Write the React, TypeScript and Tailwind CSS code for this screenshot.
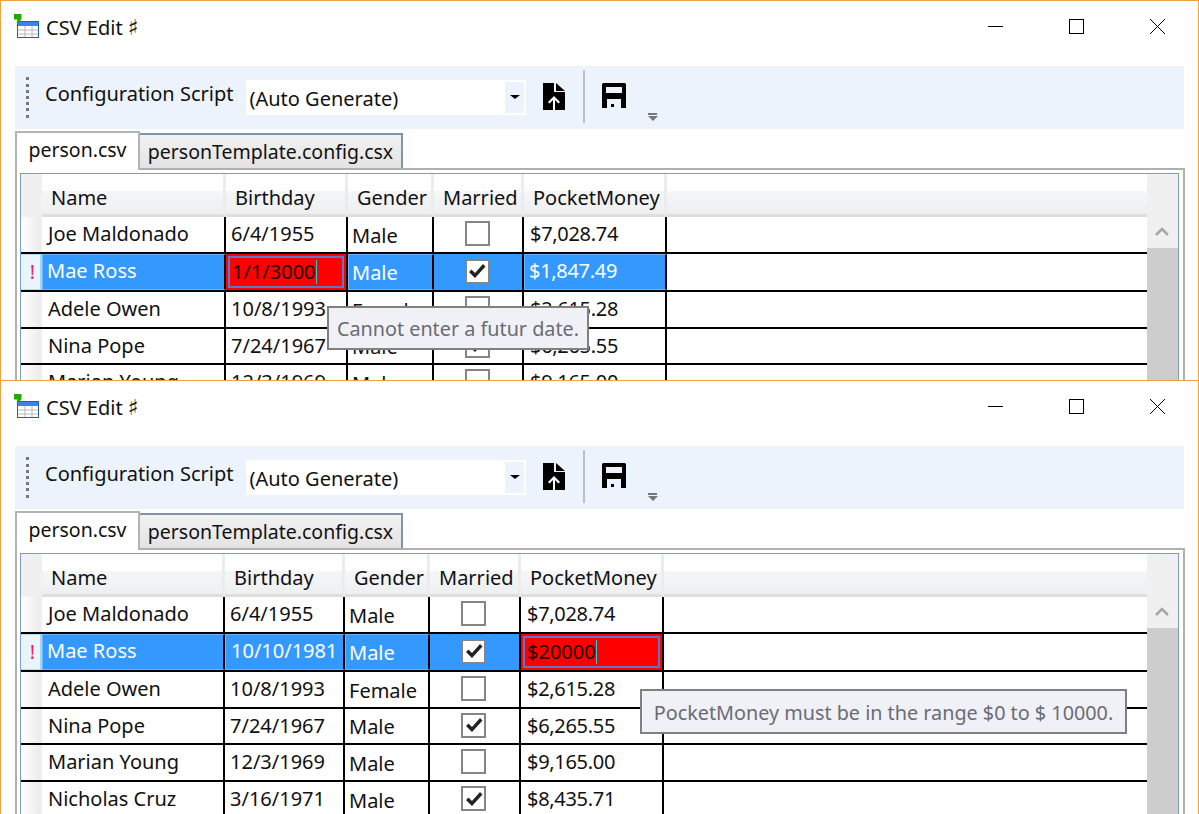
const topColumns = [
  { label: 'Name', width: 'w-[184px]' },
  { label: 'Birthday', width: 'w-[122px]' },
  { label: 'Gender', width: 'w-[86px]' },
  { label: 'Married', width: 'w-[90px]' },
  { label: 'PocketMoney', width: 'w-[143px]' },
];

const bottomColumns = [
  { label: 'Name', width: 'w-[183px]' },
  { label: 'Birthday', width: 'w-[120px]' },
  { label: 'Gender', width: 'w-[85px]' },
  { label: 'Married', width: 'w-[91px]' },
  { label: 'PocketMoney', width: 'w-[143px]' },
];

const topRows = [
  { name: 'Joe Maldonado', birthday: '6/4/1955', gender: 'Male', married: false, money: '$7,028.74', height: 'h-[37px]' },
  { name: 'Mae Ross', birthday: '1/1/3000', gender: 'Male', married: true, money: '$1,847.49', height: 'h-[38px]', selected: true },
  { name: 'Adele Owen', birthday: '10/8/1993', gender: 'Female', married: false, money: '$2,615.28', height: 'h-[37px]' },
  { name: 'Nina Pope', birthday: '7/24/1967', gender: 'Male', married: true, money: '$6,265.55', height: 'h-[36px]' },
  { name: 'Marian Young', birthday: '12/3/1969', gender: 'Male', married: false, money: '$9,165.00', height: 'h-[37px]' },
];

const bottomRows = [
  { name: 'Joe Maldonado', birthday: '6/4/1955', gender: 'Male', married: false, money: '$7,028.74', height: 'h-[37px]' },
  { name: 'Mae Ross', birthday: '10/10/1981', gender: 'Male', married: true, money: '$20000', height: 'h-[38px]', selected: true },
  { name: 'Adele Owen', birthday: '10/8/1993', gender: 'Female', married: false, money: '$2,615.28', height: 'h-[37px]' },
  { name: 'Nina Pope', birthday: '7/24/1967', gender: 'Male', married: true, money: '$6,265.55', height: 'h-[36px]' },
  { name: 'Marian Young', birthday: '12/3/1969', gender: 'Male', married: false, money: '$9,165.00', height: 'h-[37px]' },
  { name: 'Nicholas Cruz', birthday: '3/16/1971', gender: 'Male', married: true, money: '$8,435.71', height: 'h-[37px]' },
];

function AppLogo() {
  return (
    <svg width="27" height="25" viewBox="0 0 27 25" className="-ml-[1px] shrink-0">
      <rect x="3.500" y="8.500" width="21" height="16" fill="#fff" stroke="#1f5fb4" />
      <rect x="4" y="9" width="20" height="4" fill="#3d84e6" />
      <path d="M4 17h20M4 21h20M11 13v11M18 13v11" stroke="#b8b8b8" />
      <path d="M0 1h7.500v5L5 9.500H2.500L3.500 6.500H0z" fill="#1faa00" />
    </svg>
  );
}

function OpenIcon() {
  return (
    <svg width="22" height="27" viewBox="0 0 22 27" className="shrink-0">
      <path d="M0 0h11v9h11v18H0z" fill="#000" />
      <path d="M13 0l9 8h-9z" fill="#000" />
      <path d="M11 13l6 6-1.500 1.500L12 17v10h-2V17l-3.500 3.500L5 19z" fill="#fff" />
    </svg>
  );
}

function SaveIcon() {
  return (
    <svg width="24" height="25" viewBox="0 0 24 25" className="shrink-0">
      <path
        fillRule="evenodd"
        d="M0 1.500A1.500 1.500 0 0 1 1.500 0h21A1.500 1.500 0 0 1 24 1.500V25H0zM4 4v6h16V4zM5 16v9h14v-9zM9 21h3v3H9z"
        fill="#000"
      />
    </svg>
  );
}

function Toolbar() {
  return (
    <div className="flex h-[63px] w-[1169px] shrink-0 items-center bg-[#ecf3fc]">
      <div className="ml-[11px] h-[41px] w-[3px] border-l-[3px] border-dotted border-[#777]" />
      <span className="ml-[16px] mb-[7px] text-[20px]">Configuration Script</span>
      <div className="ml-[13px] mb-[1px] flex h-[35px] w-[280px] items-center bg-white pl-[3px]">
        <span className="mt-[3px] flex-1 text-[20px]">(Auto Generate)</span>
        <div className="mr-[2px] flex h-[31px] w-[19px] items-center justify-center bg-[#ecf3fc]">
          <div className="h-0 w-0 border-x-[5px] border-t-[4px] border-x-transparent border-t-black" />
        </div>
      </div>
      <div className="ml-[17px] mb-[2px]">
        <OpenIcon />
      </div>
      <div className="ml-[18px] mb-[2px] h-[53px] w-[2px] bg-[#b8c0c8]" />
      <div className="ml-[17px] mb-[4px]">
        <SaveIcon />
      </div>
      <div className="ml-[22px] mt-[38px] flex w-[9px] flex-col items-center gap-[1px]">
        <div className="h-[2px] w-[9px] bg-[#777]" />
        <div className="h-0 w-0 border-x-[5px] border-t-[5px] border-x-transparent border-t-[#777]" />
      </div>
    </div>
  );
}

function Tabs() {
  return (
    <div className="flex h-[39px] shrink-0 items-end">
      <div className="z-10 -mb-[2px] flex h-[39px] w-[125px] items-center justify-center border-2 border-b-0 border-[#b4b4b4] bg-white pb-[3px] text-[19.500px]">
        person.csv
      </div>
      <div className="flex h-[35px] w-[263px] items-center justify-center border-2 border-b-0 border-l-0 border-[#7d96ad] bg-gradient-to-b from-[#f2f2f2] to-[#e3e3e3] text-[19.500px]">
        personTemplate.config.csx
      </div>
    </div>
  );
}

function Header({ columns }: { columns: typeof topColumns }) {
  return (
    <div className="flex h-[43px] shrink-0">
      <div className="w-[21px] bg-[#f0f0f0]" />
      {columns.map((col) => (
        <div
          key={col.label}
          className={`${col.width} flex items-center border-r-[3px] border-b-[3px] border-r-[#ececec] border-b-[#dedede] bg-[linear-gradient(#fff_42%,#f5f6f8_42%,#eeeff1)] pt-[7px] pl-[9px] text-[20px]`}
        >
          {col.label}
        </div>
      ))}
      <div className="flex-1 border-b-[3px] border-[#dedede] bg-[linear-gradient(#fff_42%,#f5f6f8_42%,#eeeff1)]" />
    </div>
  );
}

function Checkbox({ checked }: { checked: boolean }) {
  return (
    <div className="mr-[2px] mb-[2px] flex h-[25px] w-[25px] items-center justify-center border-2 border-[#858585] bg-white">
      {checked && (
        <svg width="18" height="16" viewBox="0 0 18 16">
          <path d="M1 9l2.500-2.500L7 10l8-9 2.500 2.500L7 15z" fill="#222" />
        </svg>
      )}
    </div>
  );
}

type Row = (typeof bottomRows)[number];

function Cell({
  width,
  text,
  selected,
  invalid,
  className,
}: {
  width: string;
  text: string;
  selected?: boolean;
  invalid?: boolean;
  className: string;
}) {
  if (invalid) {
    return (
      <div className={`${width} flex items-stretch border-r-2 border-black bg-[#ff0000] p-[2px] text-[20px] text-[#200]`}>
        <div className="flex flex-1 items-center border-2 border-[#5f77c4] pl-[2px]">
          <span>{text}</span>
          <div className="h-[24px] w-[1px] bg-[#21d0d8]" />
        </div>
      </div>
    );
  }
  return (
    <div
      className={`${width} flex items-center border-r-2 border-black text-[20px] ${className} ${
        selected ? 'border-y border-l border-y-[#6db4ff] border-l-[#6db4ff] bg-[#3399ff] text-white' : ''
      }`}
    >
      {text}
    </div>
  );
}

function DataRow({
  row,
  columns,
  invalidField,
}: {
  row: Row & { selected?: boolean };
  columns: typeof topColumns;
  invalidField: 'birthday' | 'money';
}) {
  const selected = !!row.selected;
  return (
    <div className={`${row.height} flex shrink-0 border-b-2 border-black`}>
      <div
        className={`flex w-[21px] shrink-0 items-center justify-center border-r-2 pl-[4px] text-[20px] text-[#ff1a4a] ${
          selected
            ? 'border-y border-y-[#b8def5] border-r-[#a5d3f0] bg-[#e9f5fc]'
            : 'border-r-[#eee] bg-gradient-to-r from-white to-[#ececec]'
        }`}
      >
        {selected ? '!' : ''}
      </div>
      <Cell
        width={columns[0].width}
        text={row.name}
        selected={selected}
        className={selected ? 'pl-[4px] pb-[2px]' : 'pl-[6px] pb-[1px]'}
      />
      <Cell
        width={columns[1].width}
        text={row.birthday}
        selected={selected}
        invalid={selected && invalidField === 'birthday'}
        className={selected ? 'pl-[5px] pb-[2px]' : 'pl-[5px] pb-[1px]'}
      />
      <Cell
        width={columns[2].width}
        text={row.gender}
        selected={selected}
        className={selected ? 'pl-[3px] pt-[2px]' : 'pl-[4px] pt-[2px]'}
      />
      <div
        className={`${columns[3].width} flex items-center justify-center border-r-2 border-black ${
          selected ? 'bg-[#3399ff]' : ''
        }`}
      >
        <Checkbox checked={row.married} />
      </div>
      <Cell
        width={columns[4].width}
        text={row.money}
        selected={selected}
        invalid={selected && invalidField === 'money'}
        className={`tracking-[-0.3px] ${selected ? 'pl-[4px] pb-[2px]' : 'pl-[6px] pb-[1px]'}`}
      />
      <div className="flex-1" />
    </div>
  );
}

function Scrollbar() {
  return (
    <div className="flex w-[31px] shrink-0 flex-col bg-[#cdcdcd]">
      <div className="h-[74px] bg-[#f0f0f0] pt-[53px]">
        <svg width="14" height="9" viewBox="0 0 14 9" className="ml-[8px]">
          <path d="M1 8l6-6 6 6" fill="none" stroke="#a6a6a6" strokeWidth="2.500" />
        </svg>
      </div>
    </div>
  );
}

function Tooltip({ text, className }: { text: string; className: string }) {
  return (
    <div
      className={`absolute flex items-center justify-center border-2 border-[#808080] bg-[#f0f1f6] pt-[2px] text-[19.800px] text-[#6a6b75] ${className}`}
    >
      {text}
    </div>
  );
}

function CsvWindow({
  height,
  columns,
  rows,
  invalidField,
  tooltip,
  tooltipClass,
}: {
  height: string;
  columns: typeof topColumns;
  rows: (Row & { selected?: boolean })[];
  invalidField: 'birthday' | 'money';
  tooltip: string;
  tooltipClass: string;
}) {
  return (
    <div className={`${height} relative flex flex-col overflow-hidden border-x border-t border-[#f0a23c] bg-white pl-[14px]`}>
      <div className="flex h-[65px] shrink-0 items-start pt-[12px]">
        <AppLogo />
        <span className="ml-[5px] text-[20px]">
          CSV Edit <span className="font-['DejaVu_Sans',sans-serif] text-[22px] leading-none font-bold">♯</span>
        </span>
        <div className="flex-1" />
        <div className="mt-[13px] mr-[66px] h-[1px] w-[15px] bg-black" />
        <div className="mt-[6px] mr-[66px] h-[15px] w-[15px] border border-black" />
        <svg width="15" height="15" viewBox="0 0 15 15" className="mt-[6px] mr-[33px]">
          <path d="M0 0l15 15M15 0L0 15" stroke="#000" />
        </svg>
      </div>
      <Toolbar />
      <Tabs />
      <div className="flex w-[1170px] flex-1 border-2 border-b-0 border-[#b0b0b0] px-[4px] pt-[3px]">
        <div className="-ml-[1px] flex flex-1 border-x border-t border-[#7c9cc4]">
          <div className="flex min-w-0 flex-1 flex-col">
            <Header columns={columns} />
            {rows.map((row) => (
              <DataRow key={row.name} row={row} columns={columns} invalidField={invalidField} />
            ))}
          </div>
          <Scrollbar />
        </div>
      </div>
      <Tooltip text={tooltip} className={tooltipClass} />
    </div>
  );
}

export default function App() {
  return (
    <div className="h-[814px] w-[1199px] overflow-hidden bg-white font-['Noto_Sans',sans-serif] text-[#111]">
      <CsvWindow
        height="h-[380px]"
        columns={topColumns}
        rows={topRows}
        invalidField="birthday"
        tooltip="Cannot enter a futur date."
        tooltipClass="left-[326px] top-[305px] h-[44px] w-[262px]"
      />
      <CsvWindow
        height="h-[434px]"
        columns={bottomColumns}
        rows={bottomRows}
        invalidField="money"
        tooltip="PocketMoney must be in the range $0 to $ 10000."
        tooltipClass="left-[639px] top-[308px] h-[45px] w-[487px]"
      />
    </div>
  );
}
